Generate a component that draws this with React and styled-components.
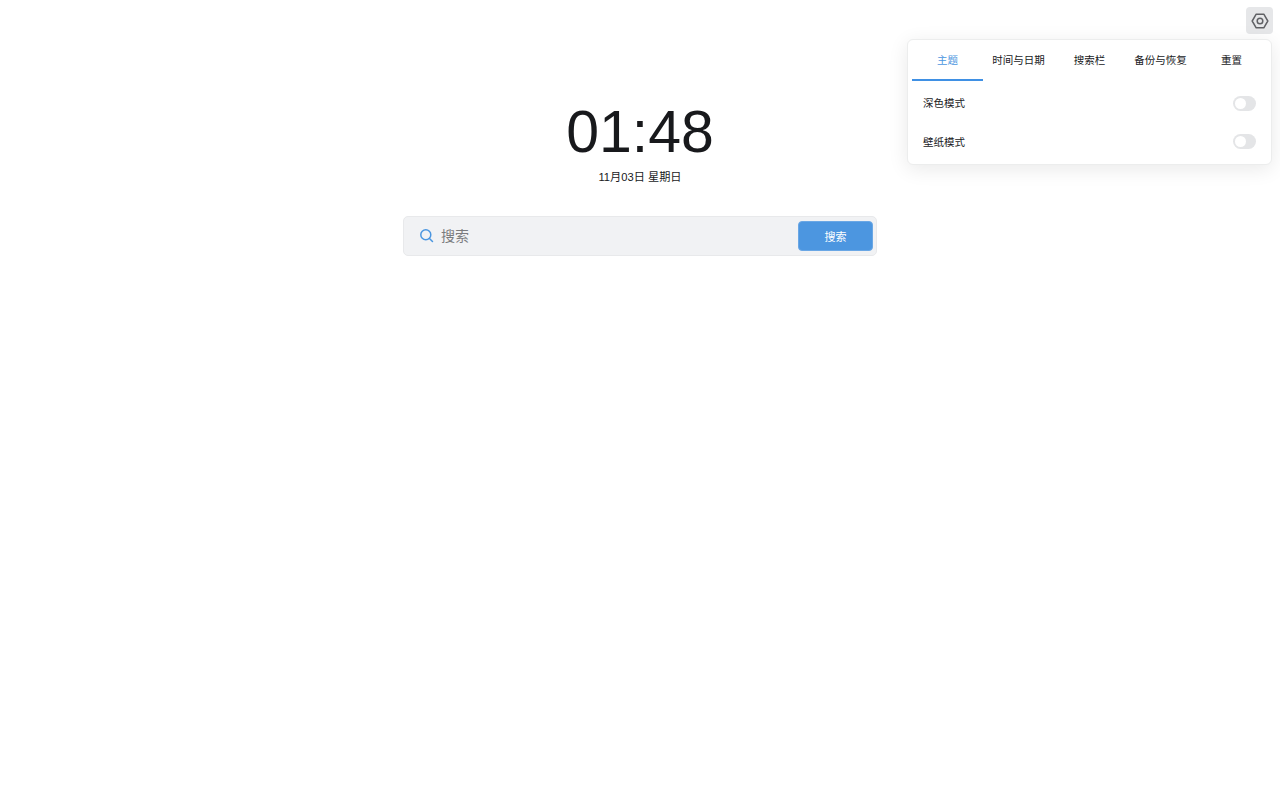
import React from 'react';
import styled, {createGlobalStyle} from 'styled-components';

const GlobalStyle = createGlobalStyle`
    html, body {
        margin: 0;
        padding: 0;
        background-color: #ffffff;
        font-family: "Liberation Sans", "Noto Sans CJK SC", sans-serif;
    }
`;

const Page = styled.div`
    position: relative;
    width: 1280px;
    height: 800px;
    overflow: hidden;
    display: flex;
    flex-direction: column;
    align-items: center;
    padding-top: 98px;
    box-sizing: border-box;
`;

const Time = styled.div`
    font-size: 59px;
    line-height: 69px;
    color: #18191c;
`;

const DateText = styled.div`
    font-size: 11.2px;
    line-height: 14px;
    margin-top: 3px;
    color: #18191c;
`;

const SearchBar = styled.form`
    width: 474px;
    height: 40px;
    margin-top: 32px;
    box-sizing: border-box;
    display: flex;
    align-items: center;
    padding: 0 3px 0 15px;
    background-color: #f1f2f4;
    border: 1px solid #e8e9eb;
    border-radius: 5px;
    color: #4a96e0;
`;

const SearchIcon = styled.svg`
    width: 15px;
    height: 15px;
    margin-top: -1px;
    flex-shrink: 0;
`;

const SearchInput = styled.input`
    flex: 1;
    min-width: 0;
    margin-left: 5px;
    border: none;
    outline: none;
    background: transparent;
    font-family: inherit;
    font-size: 14px;
    color: #18191c;

    &::placeholder {
        color: #7a7b7e;
        opacity: 1;
    }
`;

const SearchButton = styled.button`
    width: 75px;
    height: 30px;
    padding: 0;
    border: 1px solid #6aa7e5;
    border-radius: 4px;
    background-color: #4c96e0;
    color: #ffffff;
    font-family: inherit;
    font-size: 11px;
`;

const SettingsButton = styled.button`
    position: absolute;
    top: 7px;
    right: 7px;
    width: 27px;
    height: 27px;
    padding: 0;
    display: flex;
    align-items: center;
    justify-content: center;
    border: none;
    border-radius: 4px;
    background-color: #e6e7e9;
    color: #606165;
`;

const Panel = styled.div`
    position: absolute;
    top: 39px;
    right: 8px;
    width: 365px;
    height: 126px;
    box-sizing: border-box;
    padding: 0 4px;
    background-color: #ffffff;
    border: 1px solid #eceded;
    border-radius: 6px;
    box-shadow: 0 4px 20px rgba(0, 0, 0, 0.09);
`;

const Tabs = styled.div`
    display: flex;
    height: 41px;
    margin-bottom: 3px;
`;

const Tab = styled.div`
    flex: 1;
    display: flex;
    align-items: center;
    justify-content: center;
    box-sizing: border-box;
    font-size: 10.5px;
    color: ${props => props.$active ? '#4c96e0' : '#18191c'};
    border-bottom: 2px solid ${props => props.$active ? '#3f90e4' : 'transparent'};
`;

const Row = styled.div`
    display: flex;
    align-items: center;
    justify-content: space-between;
    height: 38.5px;
    padding: 0 11px;
    font-size: 10.5px;
    color: #18191c;
    line-height: 36px;
`;

const Toggle = styled.div`
    width: 23px;
    height: 15px;
    box-sizing: border-box;
    padding: 2px;
    border-radius: 8px;
    background-color: #e4e5e7;
`;

const Knob = styled.div`
    width: 11px;
    height: 11px;
    border-radius: 50%;
    background-color: #ffffff;
`;

const tabs = ['主题', '时间与日期', '搜索栏', '备份与恢复', '重置'];
const rows = ['深色模式', '壁纸模式'];

export default function App() {
    return (
        <Page>
            <GlobalStyle />
            <Time>01:48</Time>
            <DateText>11月03日 星期日</DateText>
            <SearchBar>
                <SearchIcon viewBox="0 0 15 15" fill="none" stroke="currentColor" strokeWidth="1.5" strokeLinecap="round">
                    <circle cx="6.8" cy="6.8" r="5" />
                    <path d="M10.5 10.5l3 3" />
                </SearchIcon>
                <SearchInput placeholder="搜索" />
                <SearchButton type="button">搜索</SearchButton>
            </SearchBar>
            <SettingsButton>
                <svg width="18" height="18" viewBox="0 0 18 18" fill="none" stroke="currentColor" strokeWidth="1.5">
                    <path d="M5.2 2.2h7.6L16.8 9l-4 6.8H5.2L1.2 9z" strokeLinejoin="round" />
                    <circle cx="9" cy="9" r="2.8" />
                </svg>
            </SettingsButton>
            <Panel>
                <Tabs>
                    {tabs.map((t, i) => <Tab key={t} $active={i === 0}>{t}</Tab>)}
                </Tabs>
                {rows.map(r => (
                    <Row key={r}>
                        {r}
                        <Toggle><Knob /></Toggle>
                    </Row>
                ))}
            </Panel>
        </Page>
    );
}
